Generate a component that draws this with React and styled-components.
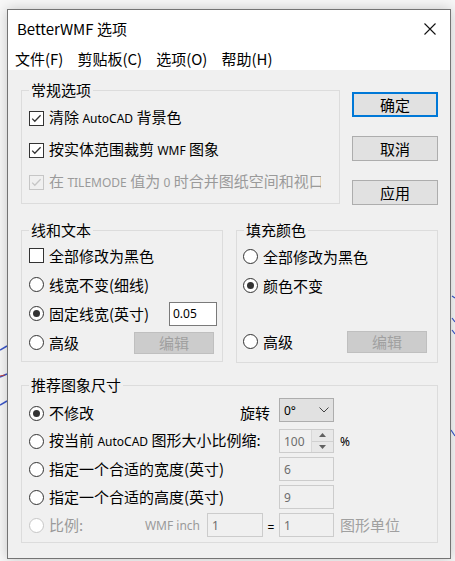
import React from "react";
import styled, { createGlobalStyle } from "styled-components";

const GlobalStyle = createGlobalStyle`
  html, body { margin: 0; padding: 0; }
  body {
    background: #f7f7f7;
    font-family: "Noto Sans CJK SC", "Noto Sans", sans-serif;
    font-size: 15px;
    color: #000;
    overflow: hidden;
  }
  #root { width: 455px; height: 561px; overflow: hidden; }
`;

const Page = styled.div`
  position: relative;
  width: 455px;
  height: 561px;
  padding: 9px 0 0 7px;
  box-sizing: border-box;
`;

const Backdrop = styled.svg`
  position: absolute;
  left: 0;
  top: 0;
  width: 455px;
  height: 561px;
  pointer-events: none;
`;

const Window = styled.div`
  position: relative;
  z-index: 1;
  width: 444px;
  height: 550px;
  box-sizing: border-box;
  border: 1px solid #747474;
  background: #f0f0f0;
  box-shadow: 0 0 12px rgba(0, 0, 0, 0.2);
  display: flex;
  flex-direction: column;
`;

const TitleBar = styled.div`
  height: 38px;
  background: #fff;
  display: flex;
  align-items: center;
  justify-content: space-between;
  padding-left: 9px;
  line-height: 20px;
`;

const CloseBtn = styled.div`
  width: 40px;
  height: 38px;
  display: flex;
  align-items: center;
  justify-content: center;
`;

const MenuBar = styled.div`
  height: 22px;
  background: #fff;
  display: flex;
  align-items: center;
`;

const MenuItem = styled.span`
  padding: 0 7px;
  line-height: 20px;
`;

const Client = styled.div`
  flex: 1;
  padding: 20px 0 0 13px;
  display: flex;
  flex-direction: column;
`;

const TopRow = styled.div`
  display: flex;
  gap: 12px;
  align-items: flex-start;
`;

const MidRow = styled.div`
  display: flex;
  gap: 13px;
  margin-top: 25px;
`;

const Group = styled.div`
  position: relative;
  box-sizing: border-box;
  width: ${(p) => p.$w}px;
  height: ${(p) => p.$h}px;
  border: 1px solid #dcdcdc;
  padding: ${(p) => p.$pad};
  margin-top: ${(p) => p.$mt || 0}px;
`;

const Legend = styled.span`
  position: absolute;
  top: -11px;
  left: 7px;
  padding: 0 2px;
  background: #f0f0f0;
  line-height: 20px;
`;

const ButtonCol = styled.div`
  display: flex;
  flex-direction: column;
  gap: 19px;
  padding-top: 2px;
`;

const DlgButton = styled.button`
  width: 86px;
  height: 25px;
  box-sizing: border-box;
  background: #e1e1e1;
  border: ${(p) => (p.$default ? "2px solid #0078d7" : "1px solid #adadad")};
  font-family: inherit;
  font-size: 15px;
  line-height: 1;
  padding: 0;
  color: #000;
`;

const Row = styled.div`
  display: flex;
  align-items: center;
  height: ${(p) => p.$h}px;
`;

const GridRow = styled.div`
  display: grid;
  grid-template-columns: 250px 55px auto;
  align-items: center;
  height: 28px;
`;

const Cell = styled.div`
  display: flex;
  align-items: center;
  min-width: 0;
`;

const Choice = styled.label`
  display: flex;
  align-items: center;
  gap: 5px;
  color: ${(p) => (p.$disabled ? "#9a9a9a" : "#000")};
  white-space: nowrap;
  line-height: 20px;
`;

const Box = styled.span`
  width: 15px;
  height: 15px;
  box-sizing: border-box;
  border: 1px solid ${(p) => (p.$disabled ? "#c6c6c6" : "#333")};
  background: ${(p) => (p.$disabled ? (p.$round ? "#fff" : "#f0f0f0") : "#fff")};
  border-radius: ${(p) => (p.$round ? "50%" : "0")};
  display: flex;
  align-items: center;
  justify-content: center;
  flex-shrink: 0;
`;

const Dot = styled.span`
  width: 7px;
  height: 7px;
  border-radius: 50%;
  background: #333;
`;

const Clip = styled.span`
  display: block;
  overflow: hidden;
  width: ${(p) => p.$w}px;
`;

const L = styled.span`
  font-family: "Noto Sans", "Open Sans", sans-serif;
  font-size: 12px;
`;

const EditBtn = styled.div`
  width: 80px;
  height: 22px;
  box-sizing: border-box;
  background: #cccccc;
  border: 1px solid #bfbfbf;
  color: #a0a0a0;
  display: flex;
  align-items: center;
  justify-content: center;
  margin-left: auto;
  margin-right: ${(p) => p.$mr}px;
  line-height: 1;
`;

const TextBox = styled.div`
  width: 48px;
  height: 24px;
  box-sizing: border-box;
  border: 1px solid #7a7a7a;
  background: #fff;
  padding-left: 3px;
  display: flex;
  align-items: center;
  margin-left: auto;
  margin-right: 5px;
`;

const Field = styled.div`
  width: ${(p) => p.$w || 55}px;
  height: 24px;
  box-sizing: border-box;
  border: 1px solid #cccccc;
  background: #f0f0f0;
  color: #6d6d6d;
  padding-left: 4px;
  display: flex;
  align-items: center;
  flex-shrink: 0;
`;

const Combo = styled.div`
  width: 55px;
  height: 24px;
  box-sizing: border-box;
  border: 1px solid #adadad;
  background: #e1e1e1;
  padding: 0 4px;
  display: flex;
  align-items: center;
  justify-content: space-between;
  align-self: start;
  margin-top: -1px;
`;

const Spinner = styled.div`
  width: 55px;
  height: 24px;
  box-sizing: border-box;
  border: 1px solid #cccccc;
  background: #f0f0f0;
  color: #6d6d6d;
  display: flex;
  align-items: stretch;
`;

const SpinValue = styled.div`
  flex: 1;
  padding-left: 4px;
  display: flex;
  align-items: center;
`;

const SpinButtons = styled.div`
  width: 21px;
  display: flex;
  flex-direction: column;
  border-left: 1px solid #d8d8d8;
  background: #e8e8e8;
`;

const SpinHalf = styled.div`
  flex: 1;
  display: flex;
  align-items: center;
  justify-content: center;
  border-top: ${(p) => (p.$bottom ? "1px solid #d0d0d0" : "none")};
`;

const Label = styled.span`
  color: ${(p) => (p.$disabled ? "#9a9a9a" : "#000")};
  margin-left: ${(p) => p.$ml || 0}px;
  margin-right: ${(p) => p.$mr || 0}px;
  white-space: nowrap;
  line-height: 20px;
`;

const Eq = styled.span`
  width: 16px;
  text-align: center;
  flex-shrink: 0;
`;

const Suffix = styled.span`
  margin-left: 6px;
  color: ${(p) => (p.$disabled ? "#a0a0a0" : "#000")};
  white-space: nowrap;
  line-height: 20px;
`;

const Spacer = styled.span`
  flex: 1;
`;

const CheckMark = ({ disabled }) => (
  <svg width="13" height="13" viewBox="0 0 13 13">
    <polyline
      points="2.2,6.6 4.8,9.2 10.6,3.2"
      fill="none"
      stroke={disabled ? "#c6c6c6" : "#333"}
      strokeWidth="1.3"
    />
  </svg>
);

const CheckBox = ({ checked, disabled, children }) => (
  <Choice $disabled={disabled}>
    <Box $disabled={disabled}>{checked && <CheckMark disabled={disabled} />}</Box>
    {children}
  </Choice>
);

const Radio = ({ checked, disabled, children }) => (
  <Choice $disabled={disabled}>
    <Box $round $disabled={disabled}>
      {checked && <Dot />}
    </Box>
    {children}
  </Choice>
);

export default function App() {
  return (
    <>
      <GlobalStyle />
      <Page>
        <Backdrop viewBox="0 0 455 561">
          <path d="M0 350 L7 346" stroke="#3a55c8" strokeWidth="1.5" fill="none" />
          <path d="M0 377 L7 374" stroke="#3a55c8" strokeWidth="1.5" fill="none" />
          <path d="M0 376 L5 375" stroke="#c04040" strokeWidth="1" fill="none" />
          <path d="M0 405 L7 401" stroke="#3a55c8" strokeWidth="1.5" fill="none" />
          <path d="M452 296 L455 298 M452 318 L455 322 M452 330 L455 334" stroke="#3a55c8" strokeWidth="1.2" fill="none" />
          <path d="M451 430 L455 436" stroke="#3a55c8" strokeWidth="1.2" fill="none" />
        </Backdrop>
        <Window>
          <TitleBar>
            <span>BetterWMF 选项</span>
            <CloseBtn>
              <svg width="12" height="12" viewBox="0 0 12 12">
                <path d="M0.5 0.5 L11.5 11.5 M11.5 0.5 L0.5 11.5" stroke="#111" strokeWidth="1.1" fill="none" />
              </svg>
            </CloseBtn>
          </TitleBar>
          <MenuBar>
            <MenuItem>文件(F)</MenuItem>
            <MenuItem>剪贴板(C)</MenuItem>
            <MenuItem>选项(O)</MenuItem>
            <MenuItem>帮助(H)</MenuItem>
          </MenuBar>
          <Client>
            <TopRow>
              <Group $w={319} $h={114} $pad="11px 0 0 7px">
                <Legend>常规选项</Legend>
                <Row $h={32}>
                  <CheckBox checked>
                    <span>
                      清除 <L>AutoCAD</L> 背景色
                    </span>
                  </CheckBox>
                </Row>
                <Row $h={32}>
                  <CheckBox checked>
                    <span>
                      按实体范围裁剪 <L>WMF</L> 图象
                    </span>
                  </CheckBox>
                </Row>
                <Row $h={32}>
                  <CheckBox checked disabled>
                    <Clip $w={272}>
                      在 <L>TILEMODE</L> 值为 <L>0</L> 时合并图纸空间和视口
                    </Clip>
                  </CheckBox>
                </Row>
              </Group>
              <ButtonCol>
                <DlgButton $default>确定</DlgButton>
                <DlgButton>取消</DlgButton>
                <DlgButton>应用</DlgButton>
              </ButtonCol>
            </TopRow>

            <MidRow>
              <Group $w={202} $h={132} $pad="10px 0 0 7px">
                <Legend>线和文本</Legend>
                <Row $h={29}>
                  <CheckBox>全部修改为黑色</CheckBox>
                </Row>
                <Row $h={29}>
                  <Radio>线宽不变(细线)</Radio>
                </Row>
                <Row $h={29}>
                  <Radio checked>固定线宽(英寸)</Radio>
                  <TextBox>
                    <L>0.05</L>
                  </TextBox>
                </Row>
                <Row $h={29}>
                  <Radio>高级</Radio>
                  <EditBtn $mr={8}>编辑</EditBtn>
                </Row>
              </Group>
              <Group $w={202} $h={133} $pad="11px 0 0 6px">
                <Legend>填充颜色</Legend>
                <Row $h={29}>
                  <Radio>全部修改为黑色</Radio>
                </Row>
                <Row $h={29}>
                  <Radio checked>颜色不变</Radio>
                </Row>
                <Row $h={27} />
                <Row $h={29}>
                  <Radio>高级</Radio>
                  <EditBtn $mr={10}>编辑</EditBtn>
                </Row>
              </Group>
            </MidRow>

            <Group $w={417} $h={158} $pad="13px 0 0 7px" $mt={22}>
              <Legend>推荐图象尺寸</Legend>
              <GridRow>
                <Cell>
                  <Radio checked>不修改</Radio>
                  <Spacer />
                  <Label $mr={9}>旋转</Label>
                </Cell>
                <Combo>
                  <L>0°</L>
                  <svg width="10" height="6" viewBox="0 0 10 6">
                    <polyline points="0.5,0.5 5,5 9.5,0.5" fill="none" stroke="#444" strokeWidth="1" />
                  </svg>
                </Combo>
              </GridRow>
              <GridRow>
                <Cell>
                  <Radio>
                    <span>
                      按当前 <L>AutoCAD</L> 图形大小比例缩:
                    </span>
                  </Radio>
                </Cell>
                <Spinner>
                  <SpinValue>
                    <L>100</L>
                  </SpinValue>
                  <SpinButtons>
                    <SpinHalf>
                      <svg width="7" height="4" viewBox="0 0 7 4">
                        <polygon points="0,4 3.5,0 7,4" fill="#606060" />
                      </svg>
                    </SpinHalf>
                    <SpinHalf $bottom>
                      <svg width="7" height="4" viewBox="0 0 7 4">
                        <polygon points="0,0 7,0 3.5,4" fill="#606060" />
                      </svg>
                    </SpinHalf>
                  </SpinButtons>
                </Spinner>
                <Suffix>
                  <L>%</L>
                </Suffix>
              </GridRow>
              <GridRow>
                <Cell>
                  <Radio>指定一个合适的宽度(英寸)</Radio>
                </Cell>
                <Field>
                  <L>6</L>
                </Field>
              </GridRow>
              <GridRow>
                <Cell>
                  <Radio>指定一个合适的高度(英寸)</Radio>
                </Cell>
                <Field>
                  <L>9</L>
                </Field>
              </GridRow>
              <GridRow>
                <Cell>
                  <Radio disabled>比例:</Radio>
                  <Spacer />
                  <Label $disabled $mr={7}>
                    <L>WMF inch</L>
                  </Label>
                  <Field $w={56}>
                    <L>1</L>
                  </Field>
                  <Eq>
                    <L>=</L>
                  </Eq>
                </Cell>
                <Field>
                  <L>1</L>
                </Field>
                <Suffix $disabled>图形单位</Suffix>
              </GridRow>
            </Group>
          </Client>
        </Window>
      </Page>
    </>
  );
}
